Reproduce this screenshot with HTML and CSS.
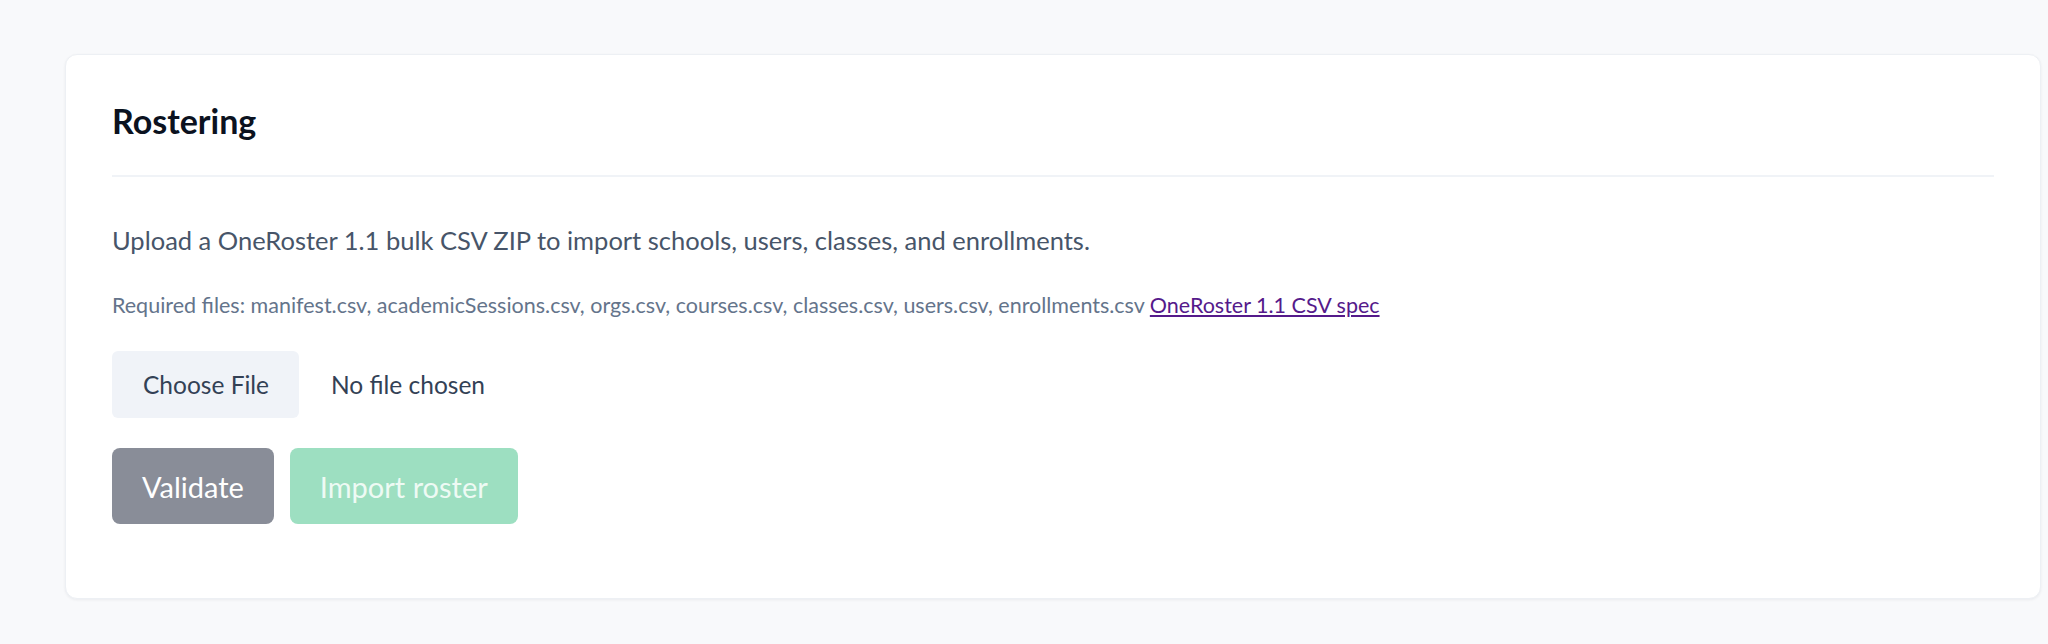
FILE: index.html
```html
<!DOCTYPE html>
<html lang="en">
<head>
  <meta charset="UTF-8" />
  <meta name="viewport" content="width=device-width, initial-scale=1.0" />
  <title>Rostering</title>
  <link rel="stylesheet" href="styles.css">
</head>
<body>
  <main class="page">
    <section class="card">
      <header class="card-head">
        <h2 class="card-title">Rostering</h2>
      </header>
      <div class="card-body">
        <p class="lead">Upload a OneRoster 1.1 bulk CSV ZIP to import schools, users, classes, and enrollments.</p>
        <p class="hint">Required files: manifest.csv, academicSessions.csv, orgs.csv, courses.csv, classes.csv, users.csv, enrollments.csv <a class="spec-link" href="#spec">OneRoster 1.1 CSV spec</a></p>
        <label class="file-picker">
          <span class="file-btn">Choose File</span>
          <span class="file-name">No file chosen</span>
        </label>
        <div class="actions">
          <button class="btn btn-validate">Validate</button>
          <button class="btn btn-import" disabled>Import roster</button>
        </div>
      </div>
    </section>
  </main>
</body>
</html>
```

FILE: styles.css
```css
body {
  margin: 0;
  font-family: 'Lato', 'Noto Sans', sans-serif;
  background: #f8f9fb;
  color: #475569;
}
.page {
  padding: 54px 0 0 65px;
  height: 644px;
  box-sizing: border-box;
  overflow: hidden;
}
.card {
  width: 1976px;
  box-sizing: border-box;
  background: #fff;
  border: 1px solid #edf0f4;
  border-radius: 12px;
  box-shadow: 0 1px 3px rgba(15, 23, 42, 0.06);
  padding: 44px 46px 74px;
}
.card-head {
  padding-bottom: 32px;
  border-bottom: 2px solid #f0f3f7;
}
.card-title {
  margin: 0;
  font-size: 34px;
  line-height: 44px;
  font-weight: 700;
  color: #0b1220;
}
.lead {
  margin: 45px 0 0;
  font-size: 25.5px;
  line-height: 36px;
  color: #475569;
}
.hint {
  margin: 32px 0 0;
  font-size: 21.5px;
  line-height: 30px;
  color: #64748b;
}
.spec-link {
  color: #551a8b;
}
.file-picker {
  display: flex;
  align-items: center;
  gap: 32px;
  margin-top: 31px;
  font-size: 24.5px;
  color: #334155;
}
.file-btn {
  display: flex;
  align-items: center;
  height: 67px;
  padding: 0 30px 0 31px;
  background: #f0f3f8;
  border-radius: 6px;
}
.actions {
  display: flex;
  gap: 16px;
  margin-top: 30px;
}
.btn {
  height: 76px;
  padding: 0 30px;
  border: none;
  border-radius: 8px;
  font-family: inherit;
  font-size: 29px;
  color: #fff;
  cursor: pointer;
}
.btn-validate {
  background: #898d98;
}
.btn-import {
  background: #9ddfc1;
  color: #eefaf4;
  cursor: default;
}
```
